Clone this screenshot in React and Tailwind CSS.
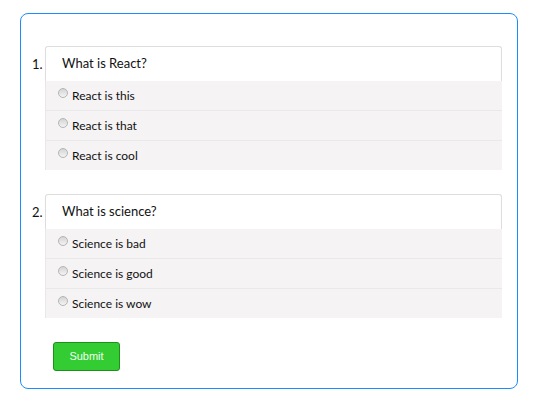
export default function App() {
  const questions = [
    { q: "What is React?", opts: ["React is this", "React is that", "React is cool"] },
    { q: "What is science?", opts: ["Science is bad", "Science is good", "Science is wow"] },
  ];
  return (
    <div className="w-[540px] h-[406px] bg-white pt-[13px] pl-[20px]" style={{ fontFamily: "Lato, 'Noto Sans', sans-serif" }}>
      <div className="w-[498px] h-[376px] border border-[#1a8cff] rounded-[8px] pt-[32px] pl-[24px] pr-[15px]">
        <ol className="flex flex-col gap-[24px]">
          {questions.map((item, i) => (
            <li key={i} className="relative">
              <span className="absolute left-[-13px] top-[9px] text-[13px] text-[#111]">{i + 1}.</span>
              <div className="border border-b-0 border-[#dddddd] rounded-t-[3px] h-[35px] pl-[16px] flex items-center text-[13px] text-[#111] bg-white">
                {item.q}
              </div>
              <div className="bg-[#f5f3f4] border-l border-[#e8e8e8]">
                {item.opts.map((o, j) => (
                  <label key={j} className={"flex items-center h-[29px] pl-[12px] text-[12px] text-[#111] " + (j > 0 ? "border-t border-[#e9e9e9] h-[30px]" : "")}>
                    <span className="w-[10px] h-[10px] rounded-full border border-[#b5b5b5] bg-gradient-to-b from-[#d4d4d4] to-[#f4f4f4] mr-[4px] relative top-[-3px]"></span>
                    {o}
                  </label>
                ))}
              </div>
            </li>
          ))}
        </ol>
        <button className="mt-[24px] ml-[8px] w-[67px] h-[29px] bg-[#33cc33] border border-[#1c8f1c] rounded-[3px] text-[11px] text-[#f0fff0]" style={{ fontFamily: "'Liberation Sans', Arial, sans-serif" }}>
          Submit
        </button>
      </div>
    </div>
  );
}
